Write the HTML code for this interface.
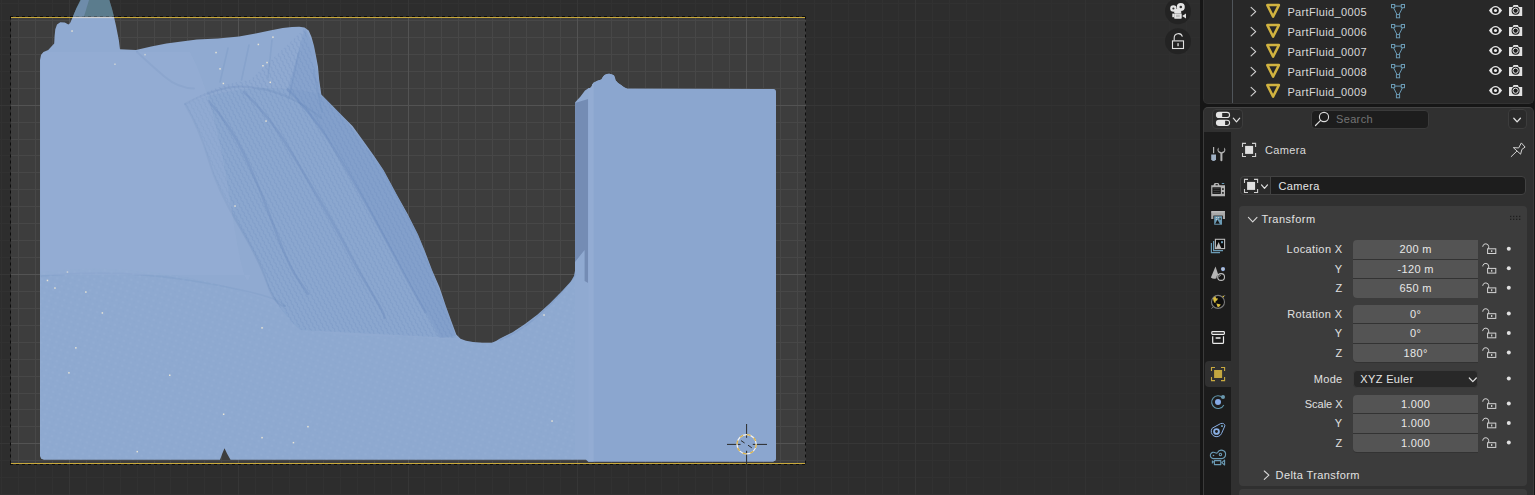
<!DOCTYPE html>
<html><head><meta charset="utf-8"><title>Blender</title>
<style>
*{box-sizing:border-box;margin:0;padding:0}
html,body{width:1535px;height:495px;overflow:hidden;background:#161616}
body{position:relative;font-family:"Liberation Sans",sans-serif;font-size:11px;color:#d6d6d6;letter-spacing:.35px}
.vp{position:absolute;left:0;top:0;display:block}
.abs{position:absolute}
.t{white-space:nowrap}
.f{background:#545454;color:#e8e8e8;text-align:center}
.l{text-align:right;color:#e0e0e0}
</style></head><body>

<svg class="vp" width="1200" height="495" viewBox="0 0 1200 495">
<defs>
<clipPath id="fc"><path d="M40.0 456.0 L40.0 60.0 L41.0 55.0 L43.5 52.0 L48.2 50.0 L54.2 43.4 L54.6 36.0 L55.3 29.3 L57.0 24.5 L60.3 22.2 L64.8 22.6 L68.4 24.5 L70.0 23.2 L73.0 16.5 L76.5 8.0 L80.5 0.0 L109.3 0.0 L112.0 9.0 L113.9 16.5 L115.9 25.3 L118.9 40.4 L120.0 49.3 L136.0 50.0 L151.2 46.5 L166.4 43.6 L181.6 41.4 L197.0 39.6 L218.0 38.6 L239.0 36.5 L255.6 33.4 L270.0 30.5 L282.7 28.1 L292.0 27.0 L299.3 26.7 L304.5 27.6 L308.7 30.6 L311.5 37.0 L314.0 45.9 L316.0 56.0 L318.0 66.7 L319.2 80.0 L321.3 94.6 L331.7 105.0 L342.0 115.4 L352.5 125.9 L363.0 140.5 L373.4 155.0 L383.5 170.0 L390.0 182.0 L397.0 195.0 L407.5 213.8 L418.0 234.6 L425.0 251.5 L432.0 270.0 L439.6 287.5 L445.9 306.3 L452.0 323.0 L456.3 334.4 L460.5 338.8 L466.0 340.8 L473.0 341.9 L482.0 342.8 L491.7 342.8 L496.0 341.0 L500.0 338.6 L512.6 332.3 L525.0 324.0 L537.6 314.6 L550.0 303.2 L562.6 290.6 L571.0 281.3 L574.0 276.0 L575.0 270.8 L575.2 102.2 L580.3 96.7 L585.0 90.5 L588.0 88.4 L591.3 87.4 L592.3 84.5 L593.6 82.7 L597.5 80.8 L601.4 79.5 L603.0 76.8 L604.6 74.9 L607.0 73.9 L609.2 73.8 L612.0 74.4 L614.0 75.6 L615.0 78.0 L615.5 80.3 L618.0 83.0 L621.0 85.0 L624.0 87.2 L627.2 88.7 L773.0 88.9 L775.2 89.8 L776.0 92.0 L776.0 458.5 L775.2 460.8 L773.0 461.6 L588.0 461.6 L586.0 459.7 L230.5 459.7 L227.0 453.5 L224.5 448.3 L222.3 453.5 L220.0 459.7 L44.0 459.8 L41.2 458.8Z"/></clipPath>
<pattern id="wv" width="5" height="4.2" patternUnits="userSpaceOnUse" patternTransform="rotate(62)"><path d="M0.4 3.2Q2.5 0.2 4.6 3.2" fill="none" stroke="#5f80b6" stroke-width="1" stroke-opacity=".55"/></pattern>
<pattern id="bm" width="7" height="6" patternUnits="userSpaceOnUse" patternTransform="rotate(20)"><circle cx="2" cy="2" r="1.3" fill="#a9c0e2" fill-opacity=".5"/><circle cx="5.4" cy="4.6" r="1.1" fill="#7d9bc9" fill-opacity=".45"/></pattern>
<linearGradient id="fg" x1="0" y1="0" x2="1" y2="0"><stop offset="0" stop-color="#93add3"/><stop offset="1" stop-color="#8da8d0"/></linearGradient>
</defs>
<rect width="1200" height="495" fill="#3d3d3d"/>
<path d="M1.5 0V495M18.5 0V495M35.5 0V495M52.5 0V495M86.5 0V495M103.5 0V495M120.5 0V495M137.5 0V495M154.5 0V495M170.5 0V495M187.5 0V495M204.5 0V495M221.5 0V495M255.5 0V495M272.5 0V495M289.5 0V495M306.5 0V495M323.5 0V495M340.5 0V495M357.5 0V495M374.5 0V495M391.5 0V495M424.5 0V495M441.5 0V495M458.5 0V495M475.5 0V495M492.5 0V495M509.5 0V495M526.5 0V495M543.5 0V495M560.5 0V495M594.5 0V495M611.5 0V495M628.5 0V495M645.5 0V495M661.5 0V495M678.5 0V495M695.5 0V495M712.5 0V495M729.5 0V495M763.5 0V495M780.5 0V495M797.5 0V495M814.5 0V495M831.5 0V495M848.5 0V495M865.5 0V495M882.5 0V495M898.5 0V495M932.5 0V495M949.5 0V495M966.5 0V495M983.5 0V495M1000.5 0V495M1017.5 0V495M1034.5 0V495M1051.5 0V495M1068.5 0V495M1102.5 0V495M1119.5 0V495M1135.5 0V495M1152.5 0V495M1169.5 0V495M1186.5 0V495M0 3.5H1200M0 20.5H1200M0 37.5H1200M0 54.5H1200M0 71.5H1200M0 88.5H1200M0 122.5H1200M0 139.5H1200M0 155.5H1200M0 172.5H1200M0 189.5H1200M0 206.5H1200M0 223.5H1200M0 240.5H1200M0 257.5H1200M0 291.5H1200M0 308.5H1200M0 325.5H1200M0 342.5H1200M0 359.5H1200M0 376.5H1200M0 393.5H1200M0 409.5H1200M0 426.5H1200M0 460.5H1200M0 477.5H1200M0 494.5H1200" stroke="#474747" stroke-width="1" fill="none"/>
<path d="M69.5 0V495M238.5 0V495M408.5 0V495M577.5 0V495M746.5 0V495M915.5 0V495M1085.5 0V495M0 105.5H1200M0 274.5H1200M0 443.5H1200" stroke="#535353" stroke-width="1" fill="none"/>
<!--FLUID-->
<path d="M40.0 456.0 L40.0 60.0 L41.0 55.0 L43.5 52.0 L48.2 50.0 L54.2 43.4 L54.6 36.0 L55.3 29.3 L57.0 24.5 L60.3 22.2 L64.8 22.6 L68.4 24.5 L70.0 23.2 L73.0 16.5 L76.5 8.0 L80.5 0.0 L109.3 0.0 L112.0 9.0 L113.9 16.5 L115.9 25.3 L118.9 40.4 L120.0 49.3 L136.0 50.0 L151.2 46.5 L166.4 43.6 L181.6 41.4 L197.0 39.6 L218.0 38.6 L239.0 36.5 L255.6 33.4 L270.0 30.5 L282.7 28.1 L292.0 27.0 L299.3 26.7 L304.5 27.6 L308.7 30.6 L311.5 37.0 L314.0 45.9 L316.0 56.0 L318.0 66.7 L319.2 80.0 L321.3 94.6 L331.7 105.0 L342.0 115.4 L352.5 125.9 L363.0 140.5 L373.4 155.0 L383.5 170.0 L390.0 182.0 L397.0 195.0 L407.5 213.8 L418.0 234.6 L425.0 251.5 L432.0 270.0 L439.6 287.5 L445.9 306.3 L452.0 323.0 L456.3 334.4 L460.5 338.8 L466.0 340.8 L473.0 341.9 L482.0 342.8 L491.7 342.8 L496.0 341.0 L500.0 338.6 L512.6 332.3 L525.0 324.0 L537.6 314.6 L550.0 303.2 L562.6 290.6 L571.0 281.3 L574.0 276.0 L575.0 270.8 L575.2 102.2 L580.3 96.7 L585.0 90.5 L588.0 88.4 L591.3 87.4 L592.3 84.5 L593.6 82.7 L597.5 80.8 L601.4 79.5 L603.0 76.8 L604.6 74.9 L607.0 73.9 L609.2 73.8 L612.0 74.4 L614.0 75.6 L615.0 78.0 L615.5 80.3 L618.0 83.0 L621.0 85.0 L624.0 87.2 L627.2 88.7 L773.0 88.9 L775.2 89.8 L776.0 92.0 L776.0 458.5 L775.2 460.8 L773.0 461.6 L588.0 461.6 L586.0 459.7 L230.5 459.7 L227.0 453.5 L224.5 448.3 L222.3 453.5 L220.0 459.7 L44.0 459.8 L41.2 458.8Z" fill="#90aad1"/>
<g clip-path="url(#fc)">

<path d="M575 103L588.2 99V283L584.6 281V250L575 262Z" fill="#748cb4"/>
<rect x="588.2" y="70" width="190" height="395" fill="#8ba6cf"/>
<rect x="588.2" y="70" width="5.4" height="395" fill="#93acd3"/>
<path d="M185 104Q200 130 208.6 159.6T238 224T267 282.7T300 330L456 338L445 306L418 234L383 170L342 115L321 94Q250 78 185 104Z" fill="#6f8fc3" fill-opacity=".13"/>
<g fill="none" stroke="#6485b8" stroke-linecap="round" stroke-linejoin="round">
<path d="M137 52Q152 66 165 77T194 88.5" stroke-width="2" stroke-opacity=".25"/>
<path d="M185 104Q222 84 249 87T294 100T321 118" stroke-width="2" stroke-opacity=".22"/>
<path d="M249 45L241.5 80M299 52L289 98M313.5 70L322 112M272 40L268 78M228 48L220 82" stroke-width="1.6" stroke-opacity=".2"/>
<path d="M185 104Q200 130 208.6 159.6T238 224T267 282.7T285 306" stroke-width="2" stroke-opacity=".22"/>
<path d="M208.6 101Q230 125 243.8 153.8T273 224T296.5 277T308 294" stroke-width="2.4" stroke-opacity=".3"/>
<path d="M243.8 92Q268 115 284.8 142T320 200.7T349.3 253.4T372.7 294.5T384.5 318" stroke-width="2.4" stroke-opacity=".3"/>
<path d="M287.7 89.3Q310 112 325.8 136.2T361 194.8T396.2 259.3T425.5 312" stroke-width="2.4" stroke-opacity=".3"/>
<path d="M41 276Q120 268 200 282T285 306" stroke-width="1.6" stroke-opacity=".14"/>
<path d="M575 275Q560 296 540 314T500 340" stroke-width="1.6" stroke-opacity=".22"/>
</g>
<path d="M305 28L314 46L319 80L321.3 94.6L342 115.4L363 140.5L383.5 170L397 195L418 234.6L432 270L445.9 306.3L456 336L440 338L425.5 312Q410 284 396.2 259.3T361 194.8T325.8 136.2T287.7 89.3Z" fill="#6485bd" fill-opacity=".2"/>
<path d="M185 104Q200 130 208.6 159.6T238 224T267 282.7T300 330L456 338L445 306L418 234L383 170L342 115L321 94L305 28L250 80Q215 84 185 104Z" fill="url(#wv)" fill-opacity=".5"/>
<path d="M38 272Q120 262 200 280T290 318T400 336L470 341L575 275V462H38Z" fill="#6f8fc3" fill-opacity=".04"/>
<path d="M38 272Q120 262 200 280T290 318T400 336L470 341L575 275V462H38Z" fill="url(#bm)" fill-opacity=".25"/>
<g fill="#f1ead6" fill-opacity=".9"><rect x="71.3" y="30.3" width="1.5" height="1.5"/><rect x="144.3" y="53.9" width="1.5" height="1.5"/><rect x="114.2" y="63.5" width="1.5" height="1.5"/><rect x="215.3" y="51.8" width="1.5" height="1.5"/><rect x="272.2" y="36.4" width="1.5" height="1.5"/><rect x="257.6" y="43.7" width="1.5" height="1.5"/><rect x="269.5" y="81.6" width="1.5" height="1.5"/><rect x="262.2" y="65.0" width="1.5" height="1.5"/><rect x="266.3" y="61.8" width="1.5" height="1.5"/><rect x="219.3" y="68.1" width="1.5" height="1.5"/><rect x="222.6" y="82.7" width="1.5" height="1.5"/><rect x="46.7" y="279.7" width="1.5" height="1.5"/><rect x="54.2" y="287.3" width="1.5" height="1.5"/><rect x="66.7" y="271.3" width="1.5" height="1.5"/><rect x="85.1" y="291.3" width="1.5" height="1.5"/><rect x="101.6" y="312.2" width="1.5" height="1.5"/><rect x="75.1" y="347.1" width="1.5" height="1.5"/><rect x="68.2" y="372.1" width="1.5" height="1.5"/><rect x="169.0" y="374.5" width="1.5" height="1.5"/><rect x="261.3" y="327.1" width="1.5" height="1.5"/><rect x="222.9" y="413.5" width="1.5" height="1.5"/><rect x="307.2" y="425.9" width="1.5" height="1.5"/><rect x="261.3" y="436.9" width="1.5" height="1.5"/><rect x="292.7" y="441.9" width="1.5" height="1.5"/><rect x="136.5" y="450.9" width="1.5" height="1.5"/><rect x="234.3" y="205.3" width="1.5" height="1.5"/><rect x="265.3" y="120.3" width="1.5" height="1.5"/><rect x="543.3" y="314.3" width="1.5" height="1.5"/><rect x="551.3" y="420.3" width="1.5" height="1.5"/></g>
<path d="M41 52H190Q215 100 230 200T250 275H41Z" fill="#9ab3d8" fill-opacity=".35"/>

</g>
<!-- passepartout -->
<path d="M0 0H1200V495H0Z M11 17V464H806V17Z" fill="#000" fill-opacity="0.25" fill-rule="evenodd"/>
<path d="M0 0H1200V495H0Z M11 17V464H806V17Z" fill="#2e2e2e" fill-opacity="0.5" fill-rule="evenodd"/>
<path d="M980 0H1200V495H980Z" fill="#2e2e2e" fill-opacity="0.45"/>

<!-- camera frame -->
<path d="M10.5 16.5V464.5 M805.5 16.5V464.5 M10 16.5H806 M10 464.5H806" stroke="#0d0d0d" stroke-width="1" stroke-dasharray="3 3" fill="none"/>
<path d="M11 17.5H805 M11 463.5H805" stroke="#c9a93c" stroke-width="1.2" fill="none"/>
<g clip-path="url(#fc)"><rect x="60" y="0" width="70" height="16.6" fill="#5b7c8d"/><path d="M72 16.6L81 0H89L84 16.6Z" fill="#7492b4" fill-opacity=".75"/><rect x="72" y="16.9" width="43" height="1.2" fill="#d2d2d2"/></g>
<g fill="none">
<path d="M727 444.4H740.5M752.8 444.4H767M746.6 424V437.8M746.6 450.8V464.4" stroke="#2a2a2a" stroke-width="1"/>
<circle cx="746.6" cy="444.3" r="9.6" stroke="#f2f2f2" stroke-width="1.3"/>
<circle cx="746.6" cy="444.3" r="9.6" stroke="#d9b24a" stroke-width="1.3" stroke-dasharray="3.77 3.77"/>
<path d="M741 440.6L744.6 443M748 445.2L751.8 447.8" stroke="#2a2a2a" stroke-width="1"/>
</g>
<g>
<circle cx="1178" cy="11.3" r="13" fill="#222" fill-opacity=".9"/>
<circle cx="1178" cy="41.3" r="13" fill="#222" fill-opacity=".9"/>
<g fill="#e4e4e4"><circle cx="1173.4" cy="8.5" r="3.2"/><circle cx="1180.8" cy="7" r="4"/><rect x="1174.2" y="9" width="7" height="4"/>
<rect x="1174.2" y="13.3" width="7.5" height="5.4" rx=".8"/><path d="M1182.2 16L1186 13.5V18.6Z"/><rect x="1172.3" y="13.6" width="1.9" height="3.6"/></g>
<circle cx="1173.4" cy="8.5" r="1.1" fill="#333"/><circle cx="1180.8" cy="7" r="1.3" fill="#333"/><rect x="1176" y="14.6" width="3.8" height="2.6" fill="#bdbdbd"/>
<g fill="none" stroke="#e0e0e0" stroke-width="1.1"><rect x="1172.5" y="40.9" width="11" height="7.6"/><path d="M1174.2 40.6V38A4.2 4.2 0 0 1 1182.4 36.6"/></g>
<rect x="1177.4" y="43.2" width="1.3" height="3" fill="#e0e0e0"/>
</g>
</svg>

<div class="abs" style="left:1203px;top:0;width:330.8px;height:103.6px;background:#282828;border-radius:0 0 5px 5px;border:1px solid #323232;border-top:none"></div>
<div class="abs" style="left:1232.3px;top:0;width:1px;height:103px;background:#50555a"></div>
<svg class="abs" style="left:0;top:0" width="1535" height="104" viewBox="0 0 1535 104"><path d="M1251.1 7.4L1255.7 11.6L1251.1 15.8" fill="none" stroke="#cfcfcf" stroke-width="1.15" stroke-linecap="round" stroke-linejoin="round"/><path d="M1267.3 5.1H1278.9L1273.1 16.6Z" fill="none" stroke="#d1b340" stroke-width="2.5" stroke-linejoin="round"/><g fill="none" stroke="#6b9bb5" stroke-width="1"><rect x="1391.5" y="4.5" width="3.2" height="3.2"/><rect x="1401.3" y="4.5" width="3.2" height="3.2"/><rect x="1396.4" y="14.6" width="3.2" height="3.2"/><path d="M1394.7 6.1H1401.3M1393.6 7.9L1397 14.6M1402.4 7.9L1399 14.6"/></g><path d="M1488.9 10.5Q1492.1 5.9 1495.5 5.9Q1498.9 5.9 1502.1 10.5Q1498.9 15.1 1495.5 15.1Q1492.1 15.1 1488.9 10.5Z" fill="#e4e4e4"/><circle cx="1495.5" cy="10.5" r="3.3" fill="#1c1c1c"/><circle cx="1495.5" cy="10.5" r="1.55" fill="#e8e8e8"/><path d="M1509 7.1H1512.6L1513.6 5.0H1517.8L1518.8 7.1H1522.2V15.9H1509Z" fill="#e2e2e2"/><circle cx="1515.6" cy="10.7" r="4" fill="#1e1e1e"/><circle cx="1515.6" cy="10.7" r="2.6" fill="none" stroke="#e2e2e2" stroke-width="1"/><path d="M1251.1 27.4L1255.7 31.6L1251.1 35.8" fill="none" stroke="#cfcfcf" stroke-width="1.15" stroke-linecap="round" stroke-linejoin="round"/><path d="M1267.3 25.1H1278.9L1273.1 36.6Z" fill="none" stroke="#d1b340" stroke-width="2.5" stroke-linejoin="round"/><g fill="none" stroke="#6b9bb5" stroke-width="1"><rect x="1391.5" y="24.5" width="3.2" height="3.2"/><rect x="1401.3" y="24.5" width="3.2" height="3.2"/><rect x="1396.4" y="34.6" width="3.2" height="3.2"/><path d="M1394.7 26.1H1401.3M1393.6 27.9L1397 34.6M1402.4 27.9L1399 34.6"/></g><path d="M1488.9 30.5Q1492.1 25.9 1495.5 25.9Q1498.9 25.9 1502.1 30.5Q1498.9 35.1 1495.5 35.1Q1492.1 35.1 1488.9 30.5Z" fill="#e4e4e4"/><circle cx="1495.5" cy="30.5" r="3.3" fill="#1c1c1c"/><circle cx="1495.5" cy="30.5" r="1.55" fill="#e8e8e8"/><path d="M1509 27.1H1512.6L1513.6 25.0H1517.8L1518.8 27.1H1522.2V35.9H1509Z" fill="#e2e2e2"/><circle cx="1515.6" cy="30.7" r="4" fill="#1e1e1e"/><circle cx="1515.6" cy="30.7" r="2.6" fill="none" stroke="#e2e2e2" stroke-width="1"/><path d="M1251.1 47.4L1255.7 51.6L1251.1 55.8" fill="none" stroke="#cfcfcf" stroke-width="1.15" stroke-linecap="round" stroke-linejoin="round"/><path d="M1267.3 45.1H1278.9L1273.1 56.6Z" fill="none" stroke="#d1b340" stroke-width="2.5" stroke-linejoin="round"/><g fill="none" stroke="#6b9bb5" stroke-width="1"><rect x="1391.5" y="44.5" width="3.2" height="3.2"/><rect x="1401.3" y="44.5" width="3.2" height="3.2"/><rect x="1396.4" y="54.6" width="3.2" height="3.2"/><path d="M1394.7 46.1H1401.3M1393.6 47.9L1397 54.6M1402.4 47.9L1399 54.6"/></g><path d="M1488.9 50.5Q1492.1 45.9 1495.5 45.9Q1498.9 45.9 1502.1 50.5Q1498.9 55.1 1495.5 55.1Q1492.1 55.1 1488.9 50.5Z" fill="#e4e4e4"/><circle cx="1495.5" cy="50.5" r="3.3" fill="#1c1c1c"/><circle cx="1495.5" cy="50.5" r="1.55" fill="#e8e8e8"/><path d="M1509 47.1H1512.6L1513.6 45.0H1517.8L1518.8 47.1H1522.2V55.9H1509Z" fill="#e2e2e2"/><circle cx="1515.6" cy="50.7" r="4" fill="#1e1e1e"/><circle cx="1515.6" cy="50.7" r="2.6" fill="none" stroke="#e2e2e2" stroke-width="1"/><path d="M1251.1 67.4L1255.7 71.6L1251.1 75.8" fill="none" stroke="#cfcfcf" stroke-width="1.15" stroke-linecap="round" stroke-linejoin="round"/><path d="M1267.3 65.1H1278.9L1273.1 76.6Z" fill="none" stroke="#d1b340" stroke-width="2.5" stroke-linejoin="round"/><g fill="none" stroke="#6b9bb5" stroke-width="1"><rect x="1391.5" y="64.5" width="3.2" height="3.2"/><rect x="1401.3" y="64.5" width="3.2" height="3.2"/><rect x="1396.4" y="74.6" width="3.2" height="3.2"/><path d="M1394.7 66.1H1401.3M1393.6 67.9L1397 74.6M1402.4 67.9L1399 74.6"/></g><path d="M1488.9 70.5Q1492.1 65.9 1495.5 65.9Q1498.9 65.9 1502.1 70.5Q1498.9 75.1 1495.5 75.1Q1492.1 75.1 1488.9 70.5Z" fill="#e4e4e4"/><circle cx="1495.5" cy="70.5" r="3.3" fill="#1c1c1c"/><circle cx="1495.5" cy="70.5" r="1.55" fill="#e8e8e8"/><path d="M1509 67.1H1512.6L1513.6 65.0H1517.8L1518.8 67.1H1522.2V75.9H1509Z" fill="#e2e2e2"/><circle cx="1515.6" cy="70.7" r="4" fill="#1e1e1e"/><circle cx="1515.6" cy="70.7" r="2.6" fill="none" stroke="#e2e2e2" stroke-width="1"/><path d="M1251.1 87.4L1255.7 91.6L1251.1 95.8" fill="none" stroke="#cfcfcf" stroke-width="1.15" stroke-linecap="round" stroke-linejoin="round"/><path d="M1267.3 85.1H1278.9L1273.1 96.6Z" fill="none" stroke="#d1b340" stroke-width="2.5" stroke-linejoin="round"/><g fill="none" stroke="#6b9bb5" stroke-width="1"><rect x="1391.5" y="84.5" width="3.2" height="3.2"/><rect x="1401.3" y="84.5" width="3.2" height="3.2"/><rect x="1396.4" y="94.6" width="3.2" height="3.2"/><path d="M1394.7 86.1H1401.3M1393.6 87.9L1397 94.6M1402.4 87.9L1399 94.6"/></g><path d="M1488.9 90.5Q1492.1 85.9 1495.5 85.9Q1498.9 85.9 1502.1 90.5Q1498.9 95.1 1495.5 95.1Q1492.1 95.1 1488.9 90.5Z" fill="#e4e4e4"/><circle cx="1495.5" cy="90.5" r="3.3" fill="#1c1c1c"/><circle cx="1495.5" cy="90.5" r="1.55" fill="#e8e8e8"/><path d="M1509 87.1H1512.6L1513.6 85.0H1517.8L1518.8 87.1H1522.2V95.9H1509Z" fill="#e2e2e2"/><circle cx="1515.6" cy="90.7" r="4" fill="#1e1e1e"/><circle cx="1515.6" cy="90.7" r="2.6" fill="none" stroke="#e2e2e2" stroke-width="1"/></svg>
<div class="abs t" style="left:1287.4px;top:4.2px;height:16px;line-height:16px;color:#d9d9d9">PartFluid_0005</div>
<div class="abs t" style="left:1287.4px;top:24.2px;height:16px;line-height:16px;color:#d9d9d9">PartFluid_0006</div>
<div class="abs t" style="left:1287.4px;top:44.2px;height:16px;line-height:16px;color:#d9d9d9">PartFluid_0007</div>
<div class="abs t" style="left:1287.4px;top:64.2px;height:16px;line-height:16px;color:#d9d9d9">PartFluid_0008</div>
<div class="abs t" style="left:1287.4px;top:84.2px;height:16px;line-height:16px;color:#d9d9d9">PartFluid_0009</div>
<div class="abs" style="left:1203px;top:107px;width:330.8px;height:400px;background:#303030;border-radius:5px 5px 0 0;border:1px solid #3b3b3b;border-top:1px solid #444"></div>
<div class="abs" style="left:1204px;top:132px;width:27px;height:370px;background:#1c1c1c"></div>
<div class="abs" style="left:1205px;top:361px;width:27px;height:26px;background:#303030;border-radius:4px 0 0 4px"></div>
<div class="abs" style="left:1211.8px;top:109.4px;width:30.9px;height:19.4px;background:#2a2a2a;border:1px solid #3c3c3c;border-radius:4px"></div>
<div class="abs" style="left:1310.6px;top:109.5px;width:118px;height:19.3px;background:#1d1d1d;border:1px solid #3a3a3a;border-radius:4px"></div>
<div class="abs t" style="left:1336px;top:111.2px;height:16px;line-height:16px;color:#747474">Search</div>
<div class="abs" style="left:1507.6px;top:109.4px;width:19.1px;height:19.4px;background:#2a2a2a;border:1px solid #3c3c3c;border-radius:4px"></div>
<div class="abs" style="left:1239.8px;top:176.4px;width:286.6px;height:19.1px;background:#1d1d1d;border:1px solid #424242;border-radius:4px"></div>
<div class="abs" style="left:1239.8px;top:176.4px;width:30.8px;height:19.1px;background:#2a2a2a;border:1px solid #424242;border-radius:4px 0 0 4px"></div>
<div class="abs t" style="left:1265px;top:141.8px;height:16px;line-height:16px;color:#d9d9d9">Camera</div>
<div class="abs t" style="left:1278.5px;top:178px;height:16px;line-height:16px;color:#e6e6e6">Camera</div>
<div class="abs" style="left:1239px;top:206.2px;width:287.7px;height:280px;background:#3c3c3c;border-radius:4px"></div>
<div class="abs" style="left:1239px;top:489.2px;width:287.7px;height:20px;background:#3c3c3c;border-radius:4px"></div>
<div class="abs t" style="left:1261.4px;top:210.8px;height:16px;line-height:16px;color:#e2e2e2;letter-spacing:.5px">Transform</div>
<div class="abs t" style="left:1275.6px;top:466.8px;height:16px;line-height:16px;color:#e2e2e2;letter-spacing:.4px">Delta Transform</div>
<div class="abs" style="left:1353.3px;top:241.1px;width:124.7px;height:57px;background:#333;border-radius:4px 0 0 4px"></div>
<div class="abs t f" style="left:1353.3px;top:240.10px;width:124.7px;height:18.5px;line-height:19.3px;border-radius:4px 0 0 0">200 m</div>
<div class="abs t l" style="left:1242px;top:240.10px;width:100.6px;height:18.5px;line-height:19.3px;letter-spacing:0.4px">Location X</div>
<div class="abs t f" style="left:1353.3px;top:259.60px;width:124.7px;height:18.5px;line-height:19.3px;border-radius:0">-120 m</div>
<div class="abs t l" style="left:1242px;top:259.60px;width:100.6px;height:18.5px;line-height:19.3px;letter-spacing:0.4px">Y</div>
<div class="abs t f" style="left:1353.3px;top:279.10px;width:124.7px;height:18.5px;line-height:19.3px;border-radius:0 0 0 4px">650 m</div>
<div class="abs t l" style="left:1242px;top:279.10px;width:100.6px;height:18.5px;line-height:19.3px;letter-spacing:0.4px">Z</div>
<div class="abs" style="left:1353.3px;top:305.9px;width:124.7px;height:57px;background:#333;border-radius:4px 0 0 4px"></div>
<div class="abs t f" style="left:1353.3px;top:304.90px;width:124.7px;height:18.5px;line-height:19.3px;border-radius:4px 0 0 0">0°</div>
<div class="abs t l" style="left:1242px;top:304.90px;width:100.6px;height:18.5px;line-height:19.3px;letter-spacing:0.4px">Rotation X</div>
<div class="abs t f" style="left:1353.3px;top:324.40px;width:124.7px;height:18.5px;line-height:19.3px;border-radius:0">0°</div>
<div class="abs t l" style="left:1242px;top:324.40px;width:100.6px;height:18.5px;line-height:19.3px;letter-spacing:0.4px">Y</div>
<div class="abs t f" style="left:1353.3px;top:343.90px;width:124.7px;height:18.5px;line-height:19.3px;border-radius:0 0 0 4px">180°</div>
<div class="abs t l" style="left:1242px;top:343.90px;width:100.6px;height:18.5px;line-height:19.3px;letter-spacing:0.4px">Z</div>
<div class="abs" style="left:1353.3px;top:395.9px;width:124.7px;height:57px;background:#333;border-radius:4px 0 0 4px"></div>
<div class="abs t f" style="left:1353.3px;top:394.90px;width:124.7px;height:18.5px;line-height:19.3px;border-radius:4px 0 0 0">1.000</div>
<div class="abs t l" style="left:1242px;top:394.90px;width:100.6px;height:18.5px;line-height:19.3px;letter-spacing:0px">Scale X</div>
<div class="abs t f" style="left:1353.3px;top:414.40px;width:124.7px;height:18.5px;line-height:19.3px;border-radius:0">1.000</div>
<div class="abs t l" style="left:1242px;top:414.40px;width:100.6px;height:18.5px;line-height:19.3px;letter-spacing:0.4px">Y</div>
<div class="abs t f" style="left:1353.3px;top:433.90px;width:124.7px;height:18.5px;line-height:19.3px;border-radius:0 0 0 4px">1.000</div>
<div class="abs t l" style="left:1242px;top:433.90px;width:100.6px;height:18.5px;line-height:19.3px;letter-spacing:0.4px">Z</div>
<div class="abs t" style="left:1353.3px;top:370px;width:124.7px;height:18.4px;line-height:16.4px;background:#282828;border:1px solid #3a3a3a;border-radius:4px;color:#e6e6e6;padding-left:6px">XYZ Euler</div>
<div class="abs t l" style="left:1242px;top:370px;width:100.6px;height:18.4px;line-height:19px">Mode</div>
<svg class="abs" style="left:0;top:0" width="1535" height="495" viewBox="0 0 1535 495"><g transform="translate(1482,240.9)" fill="none" stroke="#d4d4d4" stroke-width="1"><rect x="5.6" y="7.9" width="8.2" height="4.7"/><path d="M6.7 7.9V5.6A3 3 0 0 0 0.8 5.2V5.9"/><path d="M9.7 9.3V11.2" stroke-width="1.2"/></g><circle cx="1508.8" cy="248.7" r="2" fill="#e0e0e0"/><g transform="translate(1482,260.5)" fill="none" stroke="#d4d4d4" stroke-width="1"><rect x="5.6" y="7.9" width="8.2" height="4.7"/><path d="M6.7 7.9V5.6A3 3 0 0 0 0.8 5.2V5.9"/><path d="M9.7 9.3V11.2" stroke-width="1.2"/></g><circle cx="1508.8" cy="268.2" r="2" fill="#e0e0e0"/><g transform="translate(1482,280.0)" fill="none" stroke="#d4d4d4" stroke-width="1"><rect x="5.6" y="7.9" width="8.2" height="4.7"/><path d="M6.7 7.9V5.6A3 3 0 0 0 0.8 5.2V5.9"/><path d="M9.7 9.3V11.2" stroke-width="1.2"/></g><circle cx="1508.8" cy="287.7" r="2" fill="#e0e0e0"/><g transform="translate(1482,305.8)" fill="none" stroke="#d4d4d4" stroke-width="1"><rect x="5.6" y="7.9" width="8.2" height="4.7"/><path d="M6.7 7.9V5.6A3 3 0 0 0 0.8 5.2V5.9"/><path d="M9.7 9.3V11.2" stroke-width="1.2"/></g><circle cx="1508.8" cy="313.4" r="2" fill="#e0e0e0"/><g transform="translate(1482,325.2)" fill="none" stroke="#d4d4d4" stroke-width="1"><rect x="5.6" y="7.9" width="8.2" height="4.7"/><path d="M6.7 7.9V5.6A3 3 0 0 0 0.8 5.2V5.9"/><path d="M9.7 9.3V11.2" stroke-width="1.2"/></g><circle cx="1508.8" cy="332.9" r="2" fill="#e0e0e0"/><g transform="translate(1482,344.8)" fill="none" stroke="#d4d4d4" stroke-width="1"><rect x="5.6" y="7.9" width="8.2" height="4.7"/><path d="M6.7 7.9V5.6A3 3 0 0 0 0.8 5.2V5.9"/><path d="M9.7 9.3V11.2" stroke-width="1.2"/></g><circle cx="1508.8" cy="352.4" r="2" fill="#e0e0e0"/><g transform="translate(1482,395.8)" fill="none" stroke="#d4d4d4" stroke-width="1"><rect x="5.6" y="7.9" width="8.2" height="4.7"/><path d="M6.7 7.9V5.6A3 3 0 0 0 0.8 5.2V5.9"/><path d="M9.7 9.3V11.2" stroke-width="1.2"/></g><circle cx="1508.8" cy="403.4" r="2" fill="#e0e0e0"/><g transform="translate(1482,415.2)" fill="none" stroke="#d4d4d4" stroke-width="1"><rect x="5.6" y="7.9" width="8.2" height="4.7"/><path d="M6.7 7.9V5.6A3 3 0 0 0 0.8 5.2V5.9"/><path d="M9.7 9.3V11.2" stroke-width="1.2"/></g><circle cx="1508.8" cy="422.9" r="2" fill="#e0e0e0"/><g transform="translate(1482,434.8)" fill="none" stroke="#d4d4d4" stroke-width="1"><rect x="5.6" y="7.9" width="8.2" height="4.7"/><path d="M6.7 7.9V5.6A3 3 0 0 0 0.8 5.2V5.9"/><path d="M9.7 9.3V11.2" stroke-width="1.2"/></g><circle cx="1508.8" cy="442.4" r="2" fill="#e0e0e0"/><circle cx="1508.8" cy="378.5" r="2" fill="#e0e0e0"/><path d="M1469.3 378.0L1472.8 381.6L1476.3 378.0" fill="none" stroke="#e0e0e0" stroke-width="1.2" stroke-linecap="round" stroke-linejoin="round"/><path d="M1248.4 217.3L1252.7 221.9L1257.0 217.3" fill="none" stroke="#d6d6d6" stroke-width="1.1" stroke-linecap="round" stroke-linejoin="round"/><path d="M1264.3 471.0L1268.9 475.2L1264.3 479.4" fill="none" stroke="#d6d6d6" stroke-width="1.15" stroke-linecap="round" stroke-linejoin="round"/><rect x="1510.0" y="215.8" width="1.3" height="1.3" fill="#1f1f1f"/><rect x="1513.0" y="215.8" width="1.3" height="1.3" fill="#1f1f1f"/><rect x="1516.0" y="215.8" width="1.3" height="1.3" fill="#1f1f1f"/><rect x="1519.0" y="215.8" width="1.3" height="1.3" fill="#1f1f1f"/><rect x="1510.0" y="218.7" width="1.3" height="1.3" fill="#1f1f1f"/><rect x="1513.0" y="218.7" width="1.3" height="1.3" fill="#1f1f1f"/><rect x="1516.0" y="218.7" width="1.3" height="1.3" fill="#1f1f1f"/><rect x="1519.0" y="218.7" width="1.3" height="1.3" fill="#1f1f1f"/><g fill="#e4e4e4"><rect x="1215.9" y="111.8" width="14.2" height="6.3" rx="3.15"/><rect x="1215.9" y="119.7" width="14.2" height="6.3" rx="3.15"/></g><path d="M1222.2 112.9H1227A2.05 2.05 0 0 1 1227 117H1222.2Z" fill="#2a2a2a"/><path d="M1225.1 120.8H1227A2.05 2.05 0 0 1 1227 124.9H1225.1Z" fill="#2a2a2a"/><path d="M1233.3 118.2L1236.5 121.8L1239.7 118.2" fill="none" stroke="#e0e0e0" stroke-width="1.2" stroke-linecap="round" stroke-linejoin="round"/><path d="M1513.8 118.3L1517.1 121.9L1520.4 118.3" fill="none" stroke="#e0e0e0" stroke-width="1.3" stroke-linecap="round" stroke-linejoin="round"/><circle cx="1324" cy="117" r="4.6" fill="none" stroke="#dcdcdc" stroke-width="1.1"/><path d="M1320.6 120.4L1315.5 125.5" stroke="#dcdcdc" stroke-width="1.2" stroke-linecap="round"/><g fill="none" stroke="#d0d0d0" stroke-width="1" stroke-linejoin="round" stroke-linecap="round"><path d="M1521.6 143.2L1525.1 147.1L1521.9 149.4L1520.6 154.2L1513.3 147.6L1518.3 147.9Z"/><path d="M1516.6 151.4L1511.2 156.6"/></g><g transform="translate(1242,142.9)"><rect x="3.1" y="3" width="8" height="8" fill="#e0e0e0"/><path d="M0.5 4V0.5H4M10 0.5H13.6V4M13.6 10V13.6H10M4 13.6H0.5V10" fill="none" stroke="#cfcfcf" stroke-width="1.1"/></g><g transform="translate(1244,178.9)"><rect x="3.1" y="3" width="8" height="8" fill="#e0e0e0"/><path d="M0.5 4V0.5H4M10 0.5H13.6V4M13.6 10V13.6H10M4 13.6H0.5V10" fill="none" stroke="#cfcfcf" stroke-width="1.1"/></g><path d="M1261.5 184.9L1264.5 188.3L1267.5 184.9" fill="none" stroke="#e0e0e0" stroke-width="1.2" stroke-linecap="round" stroke-linejoin="round"/><g transform="translate(1211,367)"><rect x="3.1" y="3" width="8" height="8" fill="#c2a640"/><path d="M0.5 4V0.5H4M10 0.5H13.6V4M13.6 10V13.6H10M4 13.6H0.5V10" fill="none" stroke="#c9aa40" stroke-width="1.1"/></g><g fill="#b4b4b4"><rect x="1213" y="147" width="1.2" height="6.2"/><path d="M1211.2 154.4H1216V159.4Q1213.6 162.6 1211.2 159.4Z" fill="#9fb0c4"/><path d="M1218.6 147.6A3.3 3.3 0 0 0 1220.4 153.4V160.2A1 1 0 0 0 1222.4 160.2V153.4A3.3 3.3 0 0 0 1224.2 147.6V151L1221.4 152.2L1218.6 151Z"/></g><g><path d="M1211.2 185.2H1213.4L1214.6 183.1H1218.4L1219.6 185.2H1225V196.2H1211.2Z" fill="#b4b4b4"/><rect x="1212.4" y="187.3" width="8.4" height="6.6" fill="#111"/><path d="M1213.4 188.8H1219.8M1213.4 190.6H1219.8M1213.4 192.4H1219.8" stroke="#555" stroke-width=".7"/><rect x="1222" y="188.2" width="1.8" height="1.8" fill="#333"/><rect x="1222" y="192" width="1.8" height="1.8" fill="#333"/><rect x="1215.6" y="184.2" width="2.2" height="1.1" fill="#111"/><rect x="1221.8" y="183" width="2.4" height=".9" fill="#6fa8c8"/></g><g><path d="M1212.4 211.2H1223.8Q1225 211.2 1225 212.4V219H1211.2V212.4Q1211.2 211.2 1212.4 211.2Z" fill="#a9a9a9"/><rect x="1211.2" y="211.2" width="13.8" height="1.1" fill="#c8c8c8"/><rect x="1213.4" y="215.6" width="9.4" height="4" fill="#141414"/><rect x="1214.2" y="216.2" width="7.8" height="8.5" fill="#6b9bb5"/><path d="M1215.2 223.8L1217.5 219.8L1219.8 223.8Z" fill="#151515"/><rect x="1219.4" y="218.2" width="1.5" height="1.5" fill="#3a3a3a"/><rect x="1215.9" y="217" width="1" height="1" fill="#ccc"/><rect x="1217.9" y="217" width="1" height="1" fill="#ccc"/><rect x="1215.9" y="219" width="1" height="1" fill="#ccc"/></g><g><path d="M1213.6 241V250.6H1223" fill="none" stroke="#6b9bb5" stroke-width="1.2"/><path d="M1211.4 243V252.6H1220" fill="none" stroke="#6b9bb5" stroke-width="1.2"/><rect x="1215.4" y="239.3" width="9.2" height="9.3" fill="#0c0c0c" stroke="#bdbdbd" stroke-width="1.1"/><path d="M1216 248L1218.6 242L1221.2 248Z" fill="#bdbdbd"/><rect x="1221" y="241.2" width="2" height="2" fill="#6b9bb5"/></g><g><path d="M1215.5 266.6L1218.2 274.5Q1216.4 275.4 1216.4 278.3Q1213.4 279.6 1210.9 277.6Z" fill="#b4b4b4"/><circle cx="1223" cy="269.1" r="2.1" fill="#9bb6e8"/><circle cx="1223" cy="269.1" r="1" fill="#c0c0c0"/><circle cx="1221.1" cy="277" r="3.4" fill="#141414" stroke="#bdbdbd" stroke-width="1.1"/><path d="M1219.2 276.6L1220.4 275.2" stroke="#d0d0d0" stroke-width="1"/></g><g><circle cx="1218" cy="301.9" r="6.5" fill="#0e0e0e" stroke="#7a7a7a" stroke-width="1.1"/><path d="M1211.4 308.6L1213.6 306.6M1222.8 297.4L1225 295.2" stroke="#7a7a7a" stroke-width="1"/><path d="M1213 298L1215.6 296.2L1216 298.2L1218 298.6L1217 300.6L1215.6 301L1215.8 302.6L1214.4 302.8L1213.4 300.6Z" fill="#d9bd3f"/><path d="M1216.4 303.4L1220.8 304.4L1219.4 306.6L1217.8 307.2L1217 305.6Z" fill="#d9bd3f"/><rect x="1222.6" y="295.8" width="1.4" height="1.4" fill="#d9bd3f"/></g><g fill="none" stroke="#ececec" stroke-width="1.2"><rect x="1211.8" y="331.6" width="12.6" height="2.8" rx=".8"/><path d="M1212.7 336.2V342.4Q1212.7 343.4 1213.7 343.4H1222.5Q1223.5 343.4 1223.5 342.4V336.2"/><path d="M1216.2 338.1H1220" stroke-width="1.5" stroke-linecap="round"/></g><g><circle cx="1218" cy="402.1" r="3" fill="#86aae6"/><path d="M1222.6 397.6A6.4 6.4 0 1 0 1223.8 405" fill="none" stroke="#5f93a8" stroke-width="1.1"/><circle cx="1223" cy="397" r="2" fill="#6a98ae"/></g><g fill="none" stroke="#89afe4"><path d="M1212.2 428.2L1220.6 423.6Q1224.4 422.6 1224.9 425.8L1221.5 433.6A5.4 5.4 0 1 1 1212.2 428.2Z" stroke-width="1"/><circle cx="1216.5" cy="431.5" r="2.4" stroke-width="1.9"/><rect x="1221.1" y="425.2" width="1.8" height="1.8" fill="#6b9bb5" stroke="none"/></g><g fill="none" stroke="#6b9bb5" stroke-width="1.1" stroke-linejoin="round"><path d="M1213.6 458.6A3.2 3.2 0 1 1 1215.4 452.8Q1216.6 453.6 1217.6 452.6A4.2 4.2 0 1 1 1221.6 458.6Z"/><circle cx="1220.4" cy="454.5" r="1.2"/><rect x="1214.4" y="460.6" width="6.4" height="4"/><path d="M1212.4 460.4V463.4M1212.4 461.9H1214.4M1224.6 460.2V465L1221.8 462.6Z"/></g><circle cx="1213.5" cy="455.5" r=".8" fill="#6b9bb5"/></svg>
</body></html>
